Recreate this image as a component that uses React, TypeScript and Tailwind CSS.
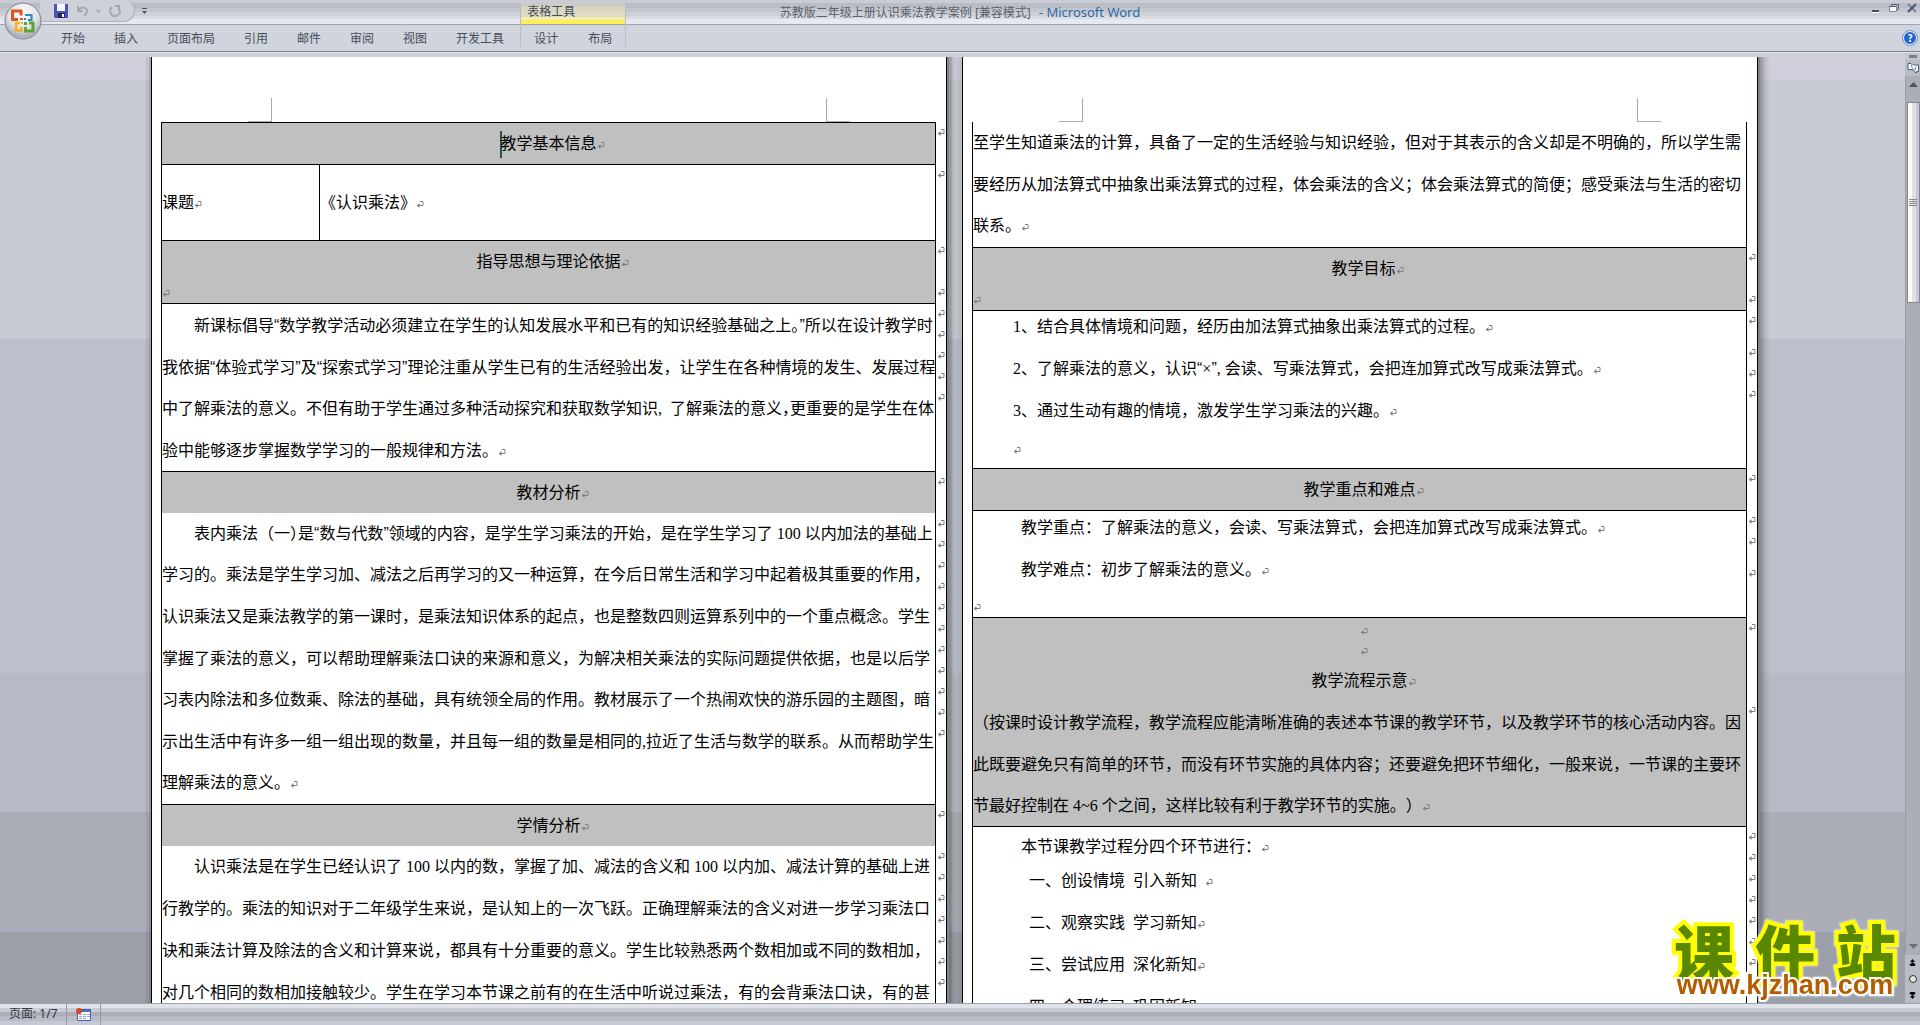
import type { ReactNode } from 'react';

type Align = 'left' | 'center';

type LineSpec = {
  text?: string;
  box?: string;
  align?: Align;
  mark?: boolean;
  caret?: boolean;
};

type RowSpec = {
  cells: { lines: LineSpec[]; span?: number; body?: string }[];
  height: string;
  shaded?: boolean;
  topBorder?: boolean;
  marks: string[];
};

const M21 = 'h-[21px]';

function Mark() {
  return (
    <svg viewBox="0 0 8 8" className="h-2 w-2 shrink-0" fill="none" stroke="#808080" aria-hidden="true">
      <path d="M4 1.5h3v4H2" />
      <path d="M3.5 3v5L.8 5.5z" fill="#808080" stroke="none" />
    </svg>
  );
}

/** Punctuation written in braces is set at half width; curly quotes use the narrow sans face. */
function setPunctuation(text: string): ReactNode[] {
  return text.split(/(\{[^}]*\}|[“”])/).map((part, i) => {
    if (part.startsWith('{')) {
      return (
        <span key={i} className="[font-feature-settings:'halt']">
          {part.slice(1, -1)}
        </span>
      );
    }
    if (part === '“' || part === '”') {
      return (
        <span key={i} className="font-['Liberation_Sans',sans-serif]">
          {part}
        </span>
      );
    }
    return part;
  });
}

function Line({ text, box = 'flex-1', align = 'left', mark, caret }: LineSpec) {
  return (
    <div className={`flex items-center whitespace-pre ${align === 'center' ? 'justify-center' : ''} ${box}`}>
      {caret && <span className="-mr-0.5 h-[27px] w-0.5 bg-[#2f4f4f]" />}
      {text && <p>{setPunctuation(text)}</p>}
      {mark && (
        <span className={`mt-0.5 ${align === 'center' ? '-mr-2' : ''}`}>
          <Mark />
        </span>
      )}
    </div>
  );
}

const title = (text: string, extra: Partial<LineSpec> = {}): LineSpec => ({
  text,
  align: 'center',
  mark: true,
  box: 'h-[42px]',
  ...extra,
});

const leftRows: RowSpec[] = [
  {
    height: 'h-[42px]',
    shaded: true,
    marks: [M21],
    cells: [{ span: 2, lines: [title('教学基本信息', { caret: true })] }],
  },
  {
    height: 'h-[76px]',
    marks: [M21],
    cells: [
      { lines: [{ text: '课题', mark: true }] },
      { lines: [{ text: '《认识乘法》', mark: true }] },
    ],
  },
  {
    height: 'h-[63px]',
    shaded: true,
    marks: [M21, 'h-[42px]'],
    cells: [{ span: 2, lines: [title('指导思想与理论依据'), { mark: true, box: 'h-[18px]' }] }],
  },
  {
    height: 'h-[168px]',
    marks: [M21, M21, M21, M21, M21],
    cells: [
      {
        span: 2,
        body: 'pt-px',
        lines: [
          { text: '新课标倡导“数学教学活动必须建立在学生的认知发展水平和已有的知识经验基础之上{。}”所以在设计教学时', box: 'flex-1 pl-8' },
          { text: '我依据“体验式学习”及“探索式学习”理论注重从学生已有的生活经验出发，让学生在各种情境的发生、发展过程' },
          { text: '中了解乘法的意义。不但有助于学生通过多种活动探究和获取数学知识,  了解乘法的意义{，}更重要的是学生在体' },
          { text: '验中能够逐步掌握数学学习的一般规律和方法。', mark: true },
        ],
      },
    ],
  },
  {
    height: 'h-[42px]',
    shaded: true,
    marks: [M21],
    cells: [{ span: 2, lines: [title('教材分析')] }],
  },
  {
    height: 'h-[291px]',
    topBorder: false,
    marks: [M21, M21, M21, M21, M21, M21, M21, M21, M21, M21, M21],
    cells: [
      {
        span: 2,
        lines: [
          { text: '表内乘法（一{）}是“数与代数”领域的内容，是学生学习乘法的开始，是在学生学习了 100 以内加法的基础上', box: 'flex-1 pl-8' },
          { text: '学习的。乘法是学生学习加、减法之后再学习的又一种运算，在今后日常生活和学习中起着极其重要的作用，' },
          { text: '认识乘法又是乘法教学的第一课时，是乘法知识体系的起点，也是整数四则运算系列中的一个重点概念。学生' },
          { text: '掌握了乘法的意义，可以帮助理解乘法口诀的来源和意义，为解决相关乘法的实际问题提供依据，也是以后学' },
          { text: '习表内除法和多位数乘、除法的基础，具有统领全局的作用。教材展示了一个热闹欢快的游乐园的主题图，暗' },
          { text: '示出生活中有许多一组一组出现的数量，并且每一组的数量是相同的,拉近了生活与数学的联系。从而帮助学生' },
          { text: '理解乘法的意义。', mark: true },
        ],
      },
    ],
  },
  {
    height: 'h-[42px]',
    shaded: true,
    marks: [M21],
    cells: [{ span: 2, lines: [title('学情分析')] }],
  },
  {
    height: 'h-[168px]',
    topBorder: false,
    marks: [M21, M21, M21, M21, M21, M21, M21],
    cells: [
      {
        span: 2,
        lines: [
          { text: '认识乘法是在学生已经认识了 100 以内的数，掌握了加、减法的含义和 100 以内加、减法计算的基础上进', box: 'flex-1 pl-8' },
          { text: '行教学的。乘法的知识对于二年级学生来说，是认知上的一次飞跃。正确理解乘法的含义对进一步学习乘法口' },
          { text: '诀和乘法计算及除法的含义和计算来说，都具有十分重要的意义。学生比较熟悉两个数相加或不同的数相加，' },
          { text: '对几个相同的数相加接触较少。学生在学习本节课之前有的在生活中听说过乘法，有的会背乘法口诀，有的甚' },
        ],
      },
    ],
  },
];

const rightRows: RowSpec[] = [
  {
    height: 'h-[125px]',
    topBorder: false,
    marks: [],
    cells: [
      {
        span: 2,
        lines: [
          { text: '至学生知道乘法的计算，具备了一定的生活经验与知识经验，但对于其表示的含义却是不明确的，所以学生需' },
          { text: '要经历从加法算式中抽象出乘法算式的过程，体会乘法的含义；体会乘法算式的简便；感受乘法与生活的密切' },
          { text: '联系。', mark: true },
        ],
      },
    ],
  },
  {
    height: 'h-[63px]',
    shaded: true,
    marks: [M21, 'h-[42px]'],
    cells: [{ span: 2, lines: [title('教学目标', { box: 'h-[42px] pl-2' }), { mark: true, box: 'h-[18px]' }] }],
  },
  {
    height: 'h-[158px]',
    marks: [M21, 'h-8', M21, M21],
    cells: [
      {
        span: 2,
        body: 'justify-between',
        lines: [
          { text: '1、结合具体情境和问题，经历由加法算式抽象出乘法算式的过程。', mark: true, box: 'h-8 pl-10' },
          { text: '2、了解乘法的意义，认识“×”, 会读、写乘法算式，会把连加算式改写成乘法算式。', mark: true, box: 'h-8 pl-10' },
          { text: '3、通过生动有趣的情境，激发学生学习乘法的兴趣。', mark: true, box: 'h-8 pl-10' },
          { mark: true, box: 'h-8 pb-2 pl-10' },
        ],
      },
    ],
  },
  {
    height: 'h-[42px]',
    shaded: true,
    marks: [M21],
    cells: [{ span: 2, lines: [title('教学重点和难点')] }],
  },
  {
    height: 'h-[107px]',
    marks: [M21, M21, 'h-8'],
    cells: [
      {
        span: 2,
        lines: [
          { text: '教学重点：了解乘法的意义，会读、写乘法算式，会把连加算式改写成乘法算式。', mark: true, box: 'h-[34px] pl-12' },
          { text: '教学难点：初步了解乘法的意义。', mark: true, box: 'h-[50px] pl-12' },
          { mark: true, box: 'h-[22px]' },
        ],
      },
    ],
  },
  {
    height: 'h-[209px]',
    shaded: true,
    marks: [M21, 'h-[83px]'],
    cells: [
      {
        span: 2,
        body: 'pt-0.5',
        lines: [
          { mark: true, align: 'center', box: 'h-[20px]' },
          { mark: true, align: 'center', box: 'h-[20px]' },
          title('教学流程示意'),
          { text: '（按课时设计教学流程，教学流程应能清晰准确的表述本节课的教学环节，以及教学环节的核心活动内容。因' },
          { text: '此既要避免只有简单的环节，而没有环节实施的具体内容；还要避免把环节细化，一般来说，一节课的主要环' },
          { text: '节最好控制在 4~6 个之间，这样比较有利于教学环节的实施。）', mark: true },
        ],
      },
    ],
  },
  {
    height: 'h-[204px]',
    marks: [M21, M21, M21, M21, M21, M21, M21],
    cells: [
      {
        span: 2,
        body: 'pt-[3px]',
        lines: [
          { text: '本节课教学过程分四个环节进行：', mark: true, box: 'h-[34px] pl-12' },
          { text: '一、创设情境  引入新知  ', mark: true, box: 'h-[34px] pl-14' },
          { text: '二、观察实践  学习新知', mark: true, box: 'mt-1 h-[42px] pl-14' },
          { text: '三、尝试应用  深化新知', mark: true, box: 'h-[42px] pl-14' },
          { text: '四、合理练习  巩固新知', mark: true, box: 'h-[42px] pl-14' },
        ],
      },
    ],
  },
];

function Page({ rows, label }: { rows: RowSpec[]; label: string }) {
  return (
    <article
      aria-label={label}
      className="mt-1 w-[796px] overflow-hidden border-x border-black bg-white font-['Liberation_Serif','Noto_Sans_CJK_SC',sans-serif] text-base text-black [text-spacing-trim:space-all]"
    >
      <div className="flex h-[65px] items-end justify-between px-24">
        <span className="h-6 w-6 border-r border-b border-[#a9aab6]" />
        <span className="h-6 w-6 border-b border-l border-[#a9aab6]" />
      </div>
      <table className="ml-[9px] w-[785px] table-fixed border-separate border-spacing-0">
        <colgroup>
          <col className="w-[158px]" />
          <col />
          <col className="w-[10px]" />
        </colgroup>
        <tbody>
          {rows.map((row, r) => (
            <tr key={r} className={row.height}>
              {row.cells.map((cell, c) => (
                <td
                  key={c}
                  colSpan={cell.span ?? 1}
                  className={`border-l border-black p-0 align-top ${row.topBorder === false ? '' : 'border-t'} ${
                    c === row.cells.length - 1 ? 'border-r' : ''
                  } ${row.shaded ? 'bg-[#c0c0c0]' : ''}`}
                >
                  <div className={`-mb-px flex flex-col ${row.height} ${cell.body ?? ''}`}>
                    {cell.lines.map((line, i) => (
                      <Line key={i} {...line} />
                    ))}
                  </div>
                </td>
              ))}
              <td className="p-0 align-top">
                <div className="flex flex-col pl-px">
                  {row.marks.map((h, i) => (
                    <span key={i} className={`flex items-end pb-[7px] ${h}`}>
                      <Mark />
                    </span>
                  ))}
                </div>
              </td>
            </tr>
          ))}
        </tbody>
      </table>
    </article>
  );
}

function OfficeLogo() {
  return (
    <svg viewBox="0 0 38 38" className="h-[38px] w-[38px]" aria-hidden="true">
      <defs>
        <radialGradient id="orb" cx="50%" cy="30%" r="75%">
          <stop offset="0" stopColor="#ffffff" />
          <stop offset="0.55" stopColor="#dfe1e6" />
          <stop offset="0.85" stopColor="#a9adb6" />
          <stop offset="1" stopColor="#e8eaee" />
        </radialGradient>
      </defs>
      <circle cx="19" cy="19" r="18" fill="url(#orb)" stroke="#7d828c" />
      <g fill="none" strokeWidth="3">
        <path d="M14 17.500H8.500V9H17v4.500" stroke="#e2551a" />
        <path d="M21 13h6.500v5H24" stroke="#3a86c8" strokeWidth="2.2" />
        <path d="M16 21h-4v7.500h5.500V25" stroke="#f6b21b" strokeWidth="2.400" />
        <path d="M25 21h4v8h-7.500v-4" stroke="#5aa832" />
      </g>
      <g>
        <rect x="16" y="16" width="3" height="2" fill="#e2551a" />
        <rect x="20" y="16" width="2" height="2" fill="#3a86c8" />
        <rect x="17" y="20" width="2" height="2" fill="#f6b21b" />
        <rect x="20" y="20" width="3" height="3" fill="#5aa832" />
      </g>
    </svg>
  );
}

const tabs = ['开始', '插入', '页面布局', '引用', '邮件', '审阅', '视图', '开发工具'];

function Ribbon() {
  return (
    <header className="relative shrink-0 text-xs text-[#474d5a]">
      <div className="relative flex h-[25px] items-start border-b border-[#9fa3ae] bg-[linear-gradient(#c9ccd5_0_3px,#babdc5_3px_8px,#c3c6cd_8px_12px,#cdd0d7_12px_16px,#d9dce3_16px_19px,#e6e9f1_19px)]">
        <div className="ml-10 flex h-[22px] w-[95px] items-center rounded-r-full border-r border-b border-[#aeb1bb] bg-[#cfd1da] pl-3.5">
          <button aria-label="保存" className="h-3.5 w-3.5">
            <svg viewBox="0 0 14 14">
              <path d="M0 0h14v14H1l-1-1z" fill="#4a55b8" />
              <path d="M3 0h8v7H3z" fill="#f4f6ff" />
              <path d="M4 9h7v5H4z" fill="#20285e" />
              <path d="M8 10h2v3H8z" fill="#fff" />
            </svg>
          </button>
          <button aria-label="撤消" className="ml-2 h-3.5 w-3.5">
            <svg viewBox="0 0 14 14" fill="none" stroke="#a6a6b8" strokeWidth="2">
              <path d="M2 2v5h5M2 7c3-5 9-4 9 0 0 3-2 4-3 5" />
            </svg>
          </button>
          <button aria-label="撤消列表" className="ml-1 h-2 w-2">
            <svg viewBox="0 0 8 8">
              <path d="M2 3h5L4.500 6z" fill="#a6a6b8" />
            </svg>
          </button>
          <button aria-label="重复" className="ml-1.5 h-3.5 w-3.5">
            <svg viewBox="0 0 14 14" fill="none" stroke="#a6a6b8" strokeWidth="2">
              <path d="M4 3c-4 4-1 9 3 9s7-5 3-8M7 2h4v5" />
            </svg>
          </button>
        </div>
        <button aria-label="自定义快速访问工具栏" className="mt-2 ml-1.5 h-2 w-2">
          <svg viewBox="0 0 8 8" fill="#50545e">
            <path d="M1 0h5v1H1zM1 3h5L3.500 6z" />
          </svg>
        </button>
        <h1 className="absolute inset-x-0 top-0.5 text-center font-['Noto_Sans','Noto_Sans_CJK_SC',sans-serif] text-xs leading-5 text-[#5b606b]">
          苏教版二年级上册认识乘法教学案例 [兼容模式]
          <span className="ml-2 text-[13px] text-[#2c6aa6]">- Microsoft Word</span>
        </h1>
        <div className="ml-auto flex items-center gap-1.5 pt-0.5 pr-0.5">
          <button aria-label="最小化" className="h-3 w-3">
            <svg viewBox="0 0 12 12">
              <path d="M2 8h7v2H2z" fill="#3b5a58" />
              <path d="M2 10h7v1H2z" fill="#fff" />
            </svg>
          </button>
          <button aria-label="向下还原" className="h-3 w-3">
            <svg viewBox="0 0 12 12" fill="none" stroke="#7482ae">
              <path d="M3.5 4V2.500h7v5H9" stroke="#4f6372" />
              <path d="M1.500 4.500h7v5h-7z" fill="#fff" />
              <path d="M1 4.500h8" stroke="#4f6372" />
            </svg>
          </button>
          <button aria-label="关闭" className="h-3 w-3">
            <svg viewBox="0 0 12 12" fill="none" strokeWidth="2">
              <path d="M2 2l8 8" stroke="#7482ae" />
              <path d="M10 2l-8 8" stroke="#3f5560" />
            </svg>
          </button>
        </div>
      </div>
      <div className="flex h-[26px] items-center bg-[#cfd4dd] pl-[61px]">
        <nav className="flex h-full gap-[29px] pr-4">
          {tabs.map((t) => (
            <button key={t} className="pb-px">
              {t}
            </button>
          ))}
        </nav>
        <div className="relative flex h-full gap-[30px] pr-3.5 pl-3.5">
          <span className="absolute -top-[22px] bottom-1 left-0 w-px bg-gradient-to-b from-[#b9bcc4] to-[#b9bfca]" />
          <span className="absolute -top-[22px] right-0 bottom-1 w-px bg-gradient-to-b from-[#b9bcc4] to-[#b9bfca]" />
          <div className="absolute inset-x-px -top-[22px] h-[21px] bg-[linear-gradient(#cccdc4_0_4px,#d8d8c0_4px_9px,#e3d9c4_9px_14px,#f3eeb0_14px_17px,#f9f05a_17px)] pl-1.5 leading-[15px]">
            表格工具
          </div>
          <button className="pb-px">设计</button>
          <button className="pb-px">布局</button>
        </div>
        <button
          aria-label="帮助"
          className="mr-[3px] ml-auto h-3.5 w-3.5 rounded-full border border-white bg-[#2465d6] text-[10px] leading-3 font-bold text-white outline outline-[#6d93cf]"
        >
          ?
        </button>
      </div>
      <div className="h-0.5 border-t border-[#7d8187] bg-[#e2e3ea]" />
      <button aria-label="Office 按钮" className="absolute top-0.5 left-1">
        <OfficeLogo />
      </button>
    </header>
  );
}

function ScrollRail() {
  return (
    <aside className="flex w-[15px] flex-col items-center bg-[#c3c6cf]">
      <span className="mt-0.5 h-[3px] w-2 shrink-0 bg-[#7b7d84]" />
      <button aria-label="标尺" className="mt-0.5 flex h-4 w-full shrink-0 items-center justify-center bg-[#b9bcc5]">
        <svg viewBox="0 0 12 12" className="h-3 w-3" fill="#fff" stroke="#47607c">
          <path d="M1 1.500h3l1.500 1.500h6v6.500H9.500V11L7 9.500 5.500 7.500H1z" />
          <path d="M4 2.500l1 3 3 3 1-4" stroke="#7c8fa4" />
        </svg>
      </button>
      <div className="flex w-full flex-1 flex-col items-center border-l border-[#999ca5] bg-[#abaeb7]">
        <button aria-label="向上滚动" className="flex h-[26px] shrink-0 items-start pt-1.5">
          <svg viewBox="0 0 9 5" className="h-[5px] w-[9px]">
            <path d="M0 5h9L4.500 0z" fill="#50545e" />
          </svg>
        </button>
        <div className="flex h-[201px] w-[13px] shrink-0 flex-col items-center justify-center gap-px border border-[#85888f] bg-[linear-gradient(90deg,#fffbe8_0_3px,#fff_3px_4px,#dfe1ea_4px_8px,#c6c9d3_8px)]">
          <span className="h-px w-2 bg-[#85888f]" />
          <span className="h-px w-2 bg-[#85888f]" />
          <span className="h-px w-2 bg-[#85888f]" />
          <span className="h-px w-2 bg-[#85888f]" />
        </div>
        <button aria-label="向下滚动" className="mt-auto pb-1.5">
          <svg viewBox="0 0 9 5" className="h-[5px] w-[9px]">
            <path d="M0 0h9L4.500 5z" fill="#6d7079" />
          </svg>
        </button>
      </div>
      <div className="flex h-12 w-full flex-col items-center justify-around bg-[#b9bcc5]">
        <button aria-label="前一页">
          <svg viewBox="0 0 7 7" className="h-[7px] w-[7px]">
            <path d="M3.500 0L6 3H1zM3.500 3L7 6H0zM1 6h5v1H1z" />
          </svg>
        </button>
        <button aria-label="选择浏览对象" className="h-2 w-2 rounded-full border border-[#333] bg-[#e4e4da]" />
        <button aria-label="下一页">
          <svg viewBox="0 0 7 7" className="h-[7px] w-[7px]">
            <path d="M3.500 7L6 4H1zM3.500 4L7 1H0zM1 0h5v1H1z" />
          </svg>
        </button>
      </div>
    </aside>
  );
}

function StatusBar() {
  return (
    <footer className="flex h-[22px] shrink-0 items-stretch border-t border-[#9ea1ac] bg-[linear-gradient(#dfe2e8_0_4px,#c9ccd5_4px_8px,#abaeb7_8px_12px,#b9bcc6_12px_17px,#c6c9d3_17px)] text-xs leading-5 text-[#33363d]">
      <span className="border-r border-[#989ba5] pr-2 pl-[9px] font-['Noto_Sans','Noto_Sans_CJK_SC',sans-serif]">页面: 1/7</span>
      <button aria-label="宏录制" className="flex items-center border-r border-[#989ba5] px-[9px]">
        <svg viewBox="0 0 15 13" className="h-[13px] w-[15px]">
          <path d="M1 1h14v12H1z" fill="#fff" />
          <path d="M1 1h14v3H1z" fill="#4a6fc0" />
          <path d="M3 6.500h3M7 6.500h3M11 6.500h3M3 8.500h3M7 8.500h3M11 8.500h3M3 10.500h3M7 10.500h3" stroke="#8fa6d6" />
          <path d="M1.500 1.500h13v11h-13z" fill="none" stroke="#3f62ae" />
          <circle cx="3" cy="3" r="3" fill="#d9472b" />
        </svg>
      </button>
    </footer>
  );
}

function Watermark() {
  return (
    <div className="absolute right-6 bottom-7 flex w-[222px] flex-col items-center drop-shadow-[0_0_1px_#fff]">
      <div className="flex w-full justify-between font-['Noto_Sans_CJK_SC',sans-serif] text-[60px] leading-[46px] font-black text-[#5a8700] [-webkit-text-stroke:8px_#ffff00] [paint-order:stroke_fill]">
        <span>课</span>
        <span>件</span>
        <span>站</span>
      </div>
      <a
        href="#"
        className="relative font-['Liberation_Sans',sans-serif] text-[27px] leading-6 font-bold text-[#b35c00] [-webkit-text-stroke:4px_#ffffff] [paint-order:stroke_fill]"
      >
        www.kjzhan.com
      </a>
    </div>
  );
}

export default function App() {
  return (
    <div className="relative flex h-screen flex-col overflow-hidden font-['Noto_Sans_CJK_SC',sans-serif]">
      <Ribbon />
      <main className="flex min-h-0 flex-1 overflow-hidden bg-[linear-gradient(#d1cfdb_0_27px,#c8cbd4_27px_286px,#bcc0ca_286px_620px,#b7bac4_620px_759px,#abaeb7_759px_876px,#a9a9c2_876px_879px,#9b9fa8_879px)] pl-1">
        <div className="mt-1 flex-1 bg-[linear-gradient(270deg,#0000002e_0_2px,#00000012_2px_5px,transparent_6px)]" />
        <Page rows={leftRows} label="第 1 页" />
        <div className="mt-1 w-[15px] bg-[linear-gradient(90deg,#7f858a_0_2px,#00000040_2px_4px,#00000020_5px,#0000000a_8px,#00000018)]" />
        <Page rows={rightRows} label="第 2 页" />
        <div className="mt-1 flex-1 bg-[linear-gradient(90deg,#7f858a_0_2px,#00000040_2px_4px,#00000020_6px,transparent_12px)]" />
        <ScrollRail />
      </main>
      <StatusBar />
      <Watermark />
    </div>
  );
}
